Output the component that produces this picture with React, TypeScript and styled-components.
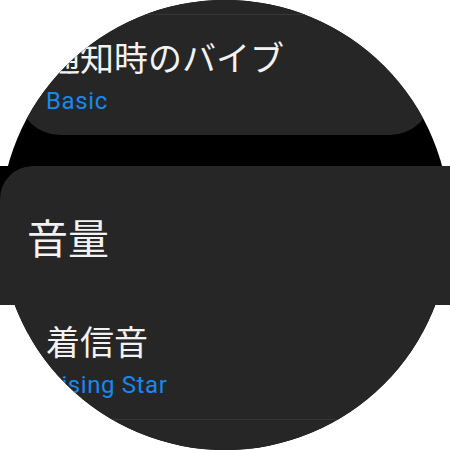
import styled, { createGlobalStyle } from 'styled-components';

const GlobalStyle = createGlobalStyle`
  html, body {
    margin: 0;
    padding: 0;
    background: #ffffff;
  }
  body {
    font-family: Roboto, "Noto Sans CJK JP", sans-serif;
  }
`;

const Frame = styled.div`
  position: relative;
  width: 450px;
  height: 450px;
  background: #ffffff;
  overflow: hidden;
`;

const Watch = styled.div`
  width: 450px;
  height: 450px;
  border-radius: 50%;
  overflow: hidden;
  background: #000000;
  display: flex;
  flex-direction: column;
`;

const TopCard = styled.div`
  flex-shrink: 0;
  height: 135px;
  margin: 0 18px 31px;
  padding: 0 28px;
  background: #262626;
  border-radius: 0 0 42px 42px;
  display: flex;
  flex-direction: column;
`;

const Divider = styled.div<{ $gap: number }>`
  height: 1px;
  background: #363636;
  margin: ${(p) => p.$gap}px -60px 0;
  flex-shrink: 0;
`;

const HeaderSpace = styled.div`
  flex-shrink: 0;
  height: 139px;
`;

const ItemCard = styled.div`
  flex: 1;
  background: #262626;
  padding: 18px 0 0 46px;
  display: flex;
  flex-direction: column;
`;

const Title = styled.div<{ $top: number }>`
  margin-top: ${(p) => p.$top}px;
  font-size: 34px;
  line-height: 40px;
  color: #f2f2f2;
  white-space: nowrap;
`;

const Sub = styled.div`
  margin-top: 8px;
  font-size: 24px;
  line-height: 28px;
  letter-spacing: 0.6px;
  color: #1589f0;
  white-space: nowrap;
`;

/* sticky section header lying over the scrolled list */
const StickyHeader = styled.div`
  position: absolute;
  top: 166px;
  left: 0;
  width: 450px;
  height: 139px;
  background: #000000;
  display: flex;
`;

const HeaderPanel = styled.div`
  flex: 1;
  background: #262626;
  border-top-left-radius: 33px;
  padding: 50px 0 0 27px;
`;

const HeaderText = styled.div`
  font-size: 41px;
  line-height: 48px;
  color: #f2f2f2;
`;

export default function App() {
  return (
    <>
      <GlobalStyle />
      <Frame>
        <Watch>
          <TopCard>
            <Divider $gap={14} />
            <Title $top={24}>通知時のバイブ</Title>
            <Sub>Basic</Sub>
          </TopCard>
          <HeaderSpace />
          <ItemCard>
            <Title $top={0}>着信音</Title>
            <Sub>Rising Star</Sub>
            <Divider $gap={20} />
          </ItemCard>
        </Watch>
        <StickyHeader>
          <HeaderPanel>
            <HeaderText>音量</HeaderText>
          </HeaderPanel>
        </StickyHeader>
      </Frame>
    </>
  );
}
